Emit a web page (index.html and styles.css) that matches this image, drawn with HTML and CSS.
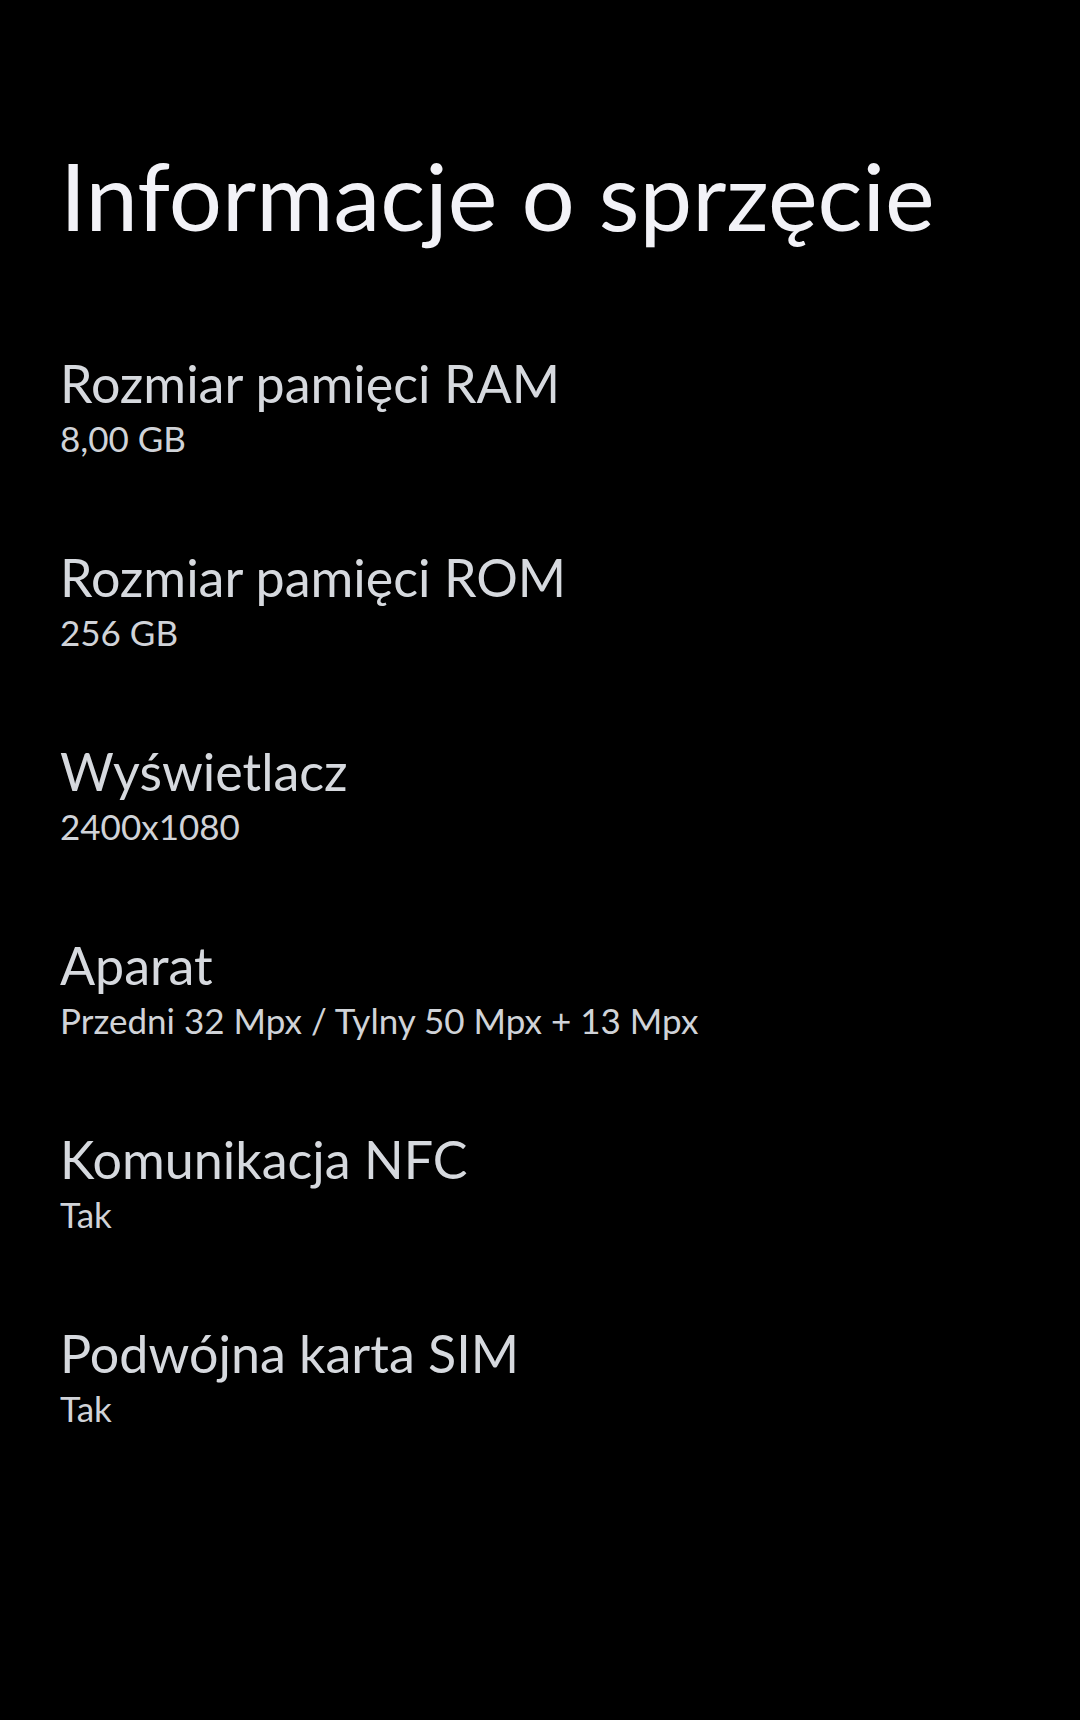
FILE: index.html
```html
<!DOCTYPE html>
<html>
<head>
    <meta charset="utf-8">
    <title>Informacje o sprzęcie</title>
    <link rel="stylesheet" href="styles.css">
</head>
<body>
<div class="page">
    <h1>Informacje o sprzęcie</h1>

    <div class="spec-list">
        <div class="spec">
            <div class="spec-title">Rozmiar pamięci RAM</div>
            <div class="spec-value">8,00 GB</div>
        </div>
        <div class="spec">
            <div class="spec-title">Rozmiar pamięci ROM</div>
            <div class="spec-value">256 GB</div>
        </div>
        <div class="spec">
            <div class="spec-title">Wyświetlacz</div>
            <div class="spec-value">2400x1080</div>
        </div>
        <div class="spec">
            <div class="spec-title">Aparat</div>
            <div class="spec-value">Przedni 32 Mpx / Tylny 50 Mpx + 13 Mpx</div>
        </div>
        <div class="spec">
            <div class="spec-title">Komunikacja NFC</div>
            <div class="spec-value">Tak</div>
        </div>
        <div class="spec">
            <div class="spec-title">Podwójna karta SIM</div>
            <div class="spec-value">Tak</div>
        </div>
    </div>
</div>
</body>
</html>
```

FILE: styles.css
```css
html, body {
    margin: 0;
    background-color: #000;
}

body {
    min-height: 1720px;
    font-family: 'Lato', 'Noto Sans', sans-serif;
}

.page {
    padding: 147px 60px 0 60px;
}

h1 {
    margin: 0;
    font-size: 94px;
    line-height: 96px;
    font-weight: 400;
    white-space: nowrap;
    color: #f2f2f7;
}

.spec-list {
    display: flex;
    flex-direction: column;
    gap: 87px;
    margin-top: 110px;
}

.spec-title {
    font-size: 52px;
    line-height: 60px;
    color: #d6d9de;
}

.spec-value {
    margin-top: 3px;
    font-size: 35px;
    line-height: 44px;
    color: #d0d3d8;
}
```
